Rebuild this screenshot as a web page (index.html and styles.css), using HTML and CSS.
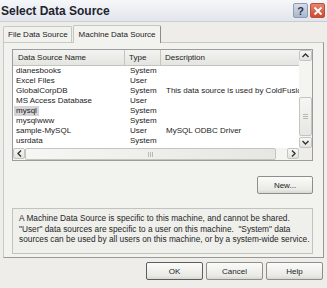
FILE: index.html
```html
<!DOCTYPE html>
<html lang="en">
<head>
    <meta charset="UTF-8">
    <title>Select Data Source</title>
    <link rel="stylesheet" href="styles.css">
</head>
<body>
    <div class="dialog">
        <div class="titlebar">
            <span class="title">Select Data Source</span>
            <span class="tb-btn tb-help">?</span>
            <span class="tb-btn tb-close">
                <svg width="10" height="10" viewBox="0 0 10 10"><path d="M1.5 1.5 L8.5 8.5 M8.5 1.5 L1.5 8.5" stroke="#fff" stroke-width="1.8" fill="none"/></svg>
            </span>
        </div>

        <div class="tabs">
            <div class="tab">File Data Source</div>
            <div class="tab active">Machine Data Source</div>
        </div>

        <div class="panel">
            <div class="list">
                <div class="list-view">
                    <div class="row header">
                        <span>Data Source Name</span><span>Type</span><span>Description</span>
                    </div>
                    <div class="row"><span>dianesbooks</span><span>System</span><span></span></div>
                    <div class="row"><span>Excel Files</span><span>User</span><span></span></div>
                    <div class="row"><span>GlobalCorpDB</span><span>System</span><span>This data source is used by ColdFusio</span></div>
                    <div class="row"><span>MS Access Database</span><span>User</span><span></span></div>
                    <div class="row"><span><em class="selected">mysql</em></span><span>System</span><span></span></div>
                    <div class="row"><span>mysqlwww</span><span>System</span><span></span></div>
                    <div class="row"><span>sample-MySQL</span><span>User</span><span>MySQL ODBC Driver</span></div>
                    <div class="row"><span>usrdata</span><span>System</span><span></span></div>
                </div>

                <div class="vscroll">
                    <div class="sb-btn">
                        <svg width="7" height="5" viewBox="0 0 7 5"><path d="M0.5 4 L3.5 1 L6.5 4" stroke="#333" stroke-width="1.4" fill="none"/></svg>
                    </div>
                    <div class="sb-track v-track"><div class="thumb v-thumb"><i></i><i></i><i></i></div></div>
                    <div class="sb-btn">
                        <svg width="7" height="5" viewBox="0 0 7 5"><path d="M0.5 1 L3.5 4 L6.5 1" stroke="#333" stroke-width="1.4" fill="none"/></svg>
                    </div>
                </div>

                <div class="hscroll">
                    <div class="sb-btn">
                        <svg width="5" height="7" viewBox="0 0 5 7"><path d="M4 0.5 L1 3.5 L4 6.5" stroke="#333" stroke-width="1.4" fill="none"/></svg>
                    </div>
                    <div class="sb-track h-track"><div class="thumb h-thumb"><i></i><i></i><i></i></div></div>
                    <div class="sb-btn">
                        <svg width="5" height="7" viewBox="0 0 5 7"><path d="M1 0.5 L4 3.5 L1 6.5" stroke="#333" stroke-width="1.4" fill="none"/></svg>
                    </div>
                </div>

                <div class="corner"></div>
            </div>

            <div class="new-row">
                <button class="btn">New...</button>
            </div>

            <div class="info">
                A Machine Data Source is specific to this machine, and cannot be shared.<br>
                "User" data sources are specific to a user on this machine.&nbsp; "System" data<br>
                sources can be used by all users on this machine, or by a system-wide service.
            </div>
        </div>

        <div class="actions">
            <button class="btn default">OK</button>
            <button class="btn">Cancel</button>
            <button class="btn">Help</button>
        </div>
    </div>
</body>
</html>
```

FILE: styles.css
```css
body {
    margin: 0;
    width: 327px;
    height: 288px;
    overflow: hidden;
    font-family: "Liberation Sans", Arial, sans-serif;
    font-size: 8px;
    color: #1c1c1c;
    background: #eeede9;
}
.dialog {
    height: 288px;
    background: #eeede9;
}
.titlebar {
    height: 21px;
    display: flex;
    align-items: center;
    background: linear-gradient(#f6f7f9, #e2e5eb);
    border-bottom: 1px solid #c9ccd3;
}
.title {
    flex: 1;
    padding-left: 1px;
    font-size: 12px;
    font-weight: bold;
    color: #1e2430;
}
.tb-btn {
    width: 15px;
    height: 15px;
    display: flex;
    align-items: center;
    justify-content: center;
    border-radius: 2px;
    box-sizing: border-box;
}
.tb-help {
    margin-right: 2px;
    background: linear-gradient(#d6dde9, #aab6cc);
    border: 1px solid #8e9bb3;
    color: #2b3348;
    font-size: 11px;
    font-weight: bold;
}
.tb-close {
    margin-right: 2px;
    background: linear-gradient(#e9866c, #cf4a2c);
    border: 1px solid #b5533e;
}
.tabs {
    display: flex;
    align-items: flex-end;
    height: 20px;
    padding-left: 3px;
}
.tab {
    height: 15px;
    line-height: 15px;
    padding: 0 3px 0 4px;
    border: 1px solid #c7c7c1;
    border-bottom: none;
    border-radius: 2px 2px 0 0;
    background: #f1f1ee;
}
.tab.active {
    height: 17px;
    line-height: 17px;
    padding: 0 4px 0 5px;
    margin-left: 1px;
    margin-bottom: -1px;
    background: #f2f2ef;
    border-right-color: #8d8d88;
    position: relative;
}
.panel {
    margin: 0 3px 0 3px;
    height: 208px;
    padding: 6px 10px 0 8px;
    border: 1px solid #c9c9c3;
    border-right-color: #9a9a94;
    border-bottom-color: #9a9a94;
    background: #f2f2ef;
}
.list {
    height: 110px;
    display: grid;
    grid-template-columns: 1fr 13px;
    grid-template-rows: 1fr 12px;
    border: 1px solid #9c9c9c;
    background: #fff;
}
.list-view {
    overflow: hidden;
    white-space: nowrap;
}
.row {
    display: grid;
    grid-template-columns: 112px 36px 1fr;
    height: 10px;
    line-height: 10px;
}
.row span {
    padding-left: 5px;
    overflow: hidden;
}
.row span:first-child {
    padding-left: 3px;
}
.row.header {
    height: 15px;
    line-height: 15px;
    background: linear-gradient(#f3f3f1, #e4e4e0);
    border-bottom: 1px solid #c4c4be;
}
.row.header span {
    padding-left: 4px;
    border-right: 1px solid #c4c4be;
}
.row.header span:first-child {
    padding-left: 5px;
}
.row.header span:last-child {
    border-right: none;
}
.selected {
    font-style: normal;
    background: #d3d3d8;
    padding: 0 2px;
    margin-left: -2px;
    display: inline-block;
}
.vscroll {
    display: flex;
    flex-direction: column;
    background: #f4f4f1;
}
.hscroll {
    display: flex;
    background: #f4f4f1;
}
.corner {
    background: #eeede9;
}
.sb-btn {
    flex: none;
    width: 12px;
    height: 11px;
    display: flex;
    align-items: center;
    justify-content: center;
    border: 1px solid #c5c5c0;
    border-radius: 2px;
    background: linear-gradient(#f7f7f5, #e2e2de);
    box-sizing: border-box;
}
.vscroll .sb-btn {
    width: 13px;
}
.sb-track {
    flex: 1;
    display: flex;
}
.v-track {
    flex-direction: column;
    padding-top: 36px;
    padding-bottom: 1px;
}
.h-track {
    padding-right: 11px;
}
.thumb {
    display: flex;
    align-items: center;
    justify-content: center;
    gap: 1px;
    border: 1px solid #c5c5c0;
    border-radius: 2px;
    background: linear-gradient(90deg, #f6f6f4, #e6e6e2);
    box-sizing: border-box;
}
.v-thumb {
    flex: 1;
    flex-direction: column;
    background: linear-gradient(#f6f6f4, #e6e6e2);
}
.h-thumb {
    flex: 1;
}
.thumb i {
    display: block;
    background: #b9b9b4;
}
.v-thumb i {
    width: 5px;
    height: 1px;
}
.h-thumb i {
    width: 1px;
    height: 5px;
}
.new-row {
    display: flex;
    justify-content: flex-end;
    margin-top: 15px;
}
.btn {
    font-family: "Liberation Sans", Arial, sans-serif;
    font-size: 8px;
    color: #1c1c1c;
    width: 56px;
    height: 18px;
    padding: 0;
    border: 1px solid #8f8f8a;
    border-radius: 2px;
    background: linear-gradient(#fbfbfa, #e9e9e5 80%, #d8d8d3);
}
.btn.default {
    border-color: #5e5e5a;
}
.info {
    margin-top: 14px;
    height: 35px;
    padding: 4px 0 5px 6px;
    border: 1px solid #c3c3bd;
    background: #efefec;
    font-size: 8.3px;
    line-height: 10.5px;
    white-space: nowrap;
    overflow: hidden;
    color: #262626;
}
.actions {
    display: flex;
    justify-content: flex-end;
    gap: 3px;
    padding: 4px 4px 0 0;
}
.actions .btn {
    width: 57px;
}
```
